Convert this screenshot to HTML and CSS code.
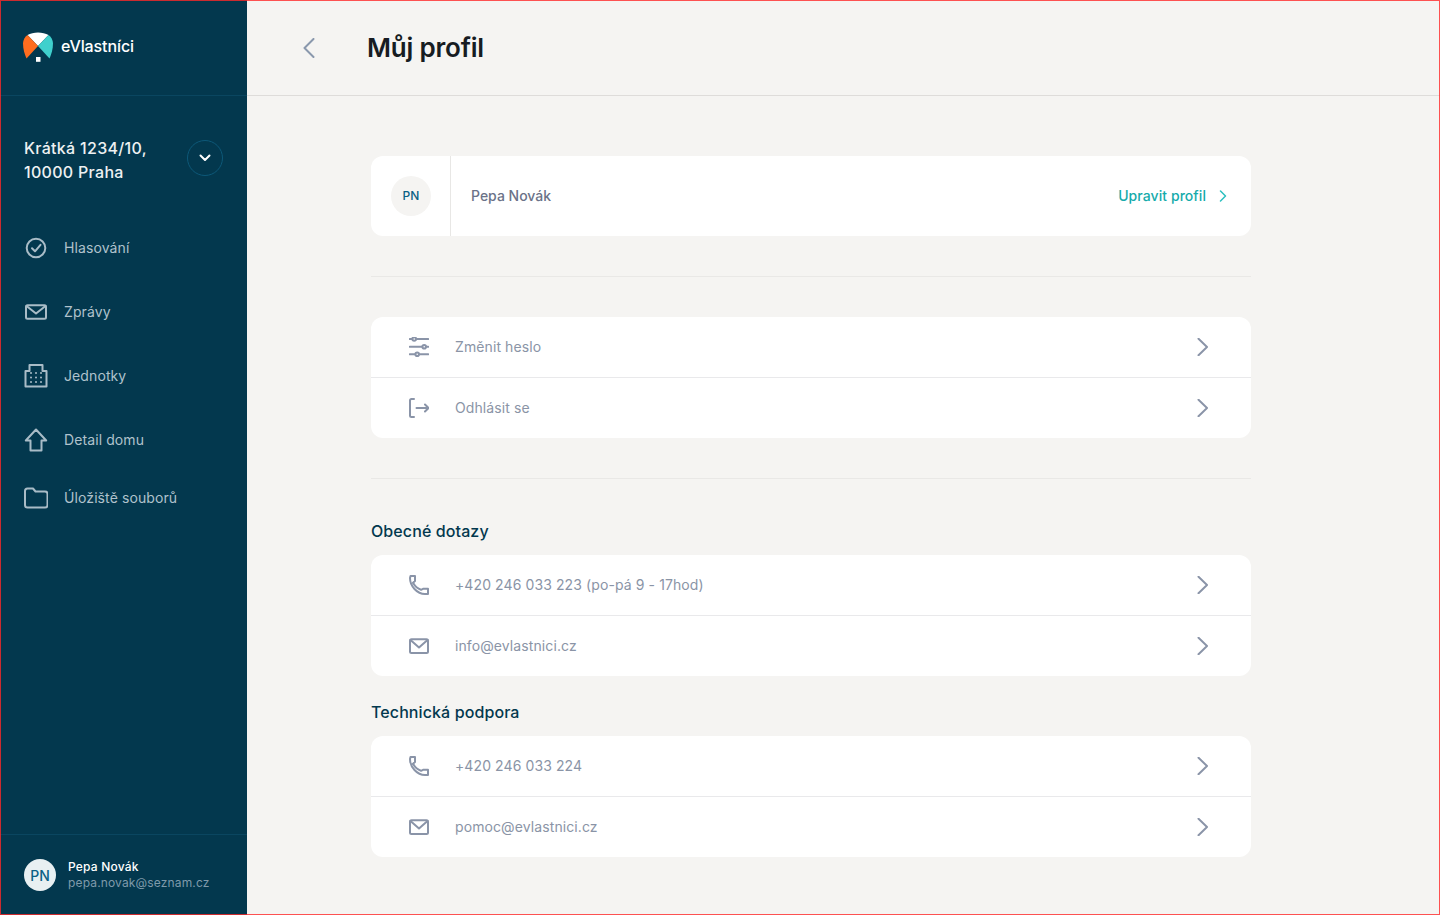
FILE: index.html
```html
<!DOCTYPE html>
<html lang="cs">
<head>
<meta charset="utf-8">
<title>Můj profil</title>
<link rel="stylesheet" href="styles.css">
</head>
<body>
<div class="app">
  <aside class="sidebar">
    <div class="brand">
      <svg class="logo" width="30" height="30" viewBox="0 0 30 30">
        <path d="M4.500 3C10 -.5 20 -.5 25.500 3L15 14Z" fill="#fff"/>
        <path d="M4.500 3 15 14 3.500 26.500C1.500 22 0 17 0 11.500 0 8 2 4.800 4.500 3Z" fill="#ff6d1f"/>
        <path d="M25.500 3 15 14 26.500 26.500C28.500 22 30 17 30 11.500 30 8 28 4.800 25.500 3Z" fill="#3fd0cd"/>
        <rect x="13" y="25" width="4.500" height="4.800" fill="#fff"/>
      </svg>
      <span class="brand-name">eVlastníci</span>
    </div>
    <div class="building">
      <div class="address">Krátká 1234/10,<br>10000 Praha</div>
      <button class="round-toggle" type="button" aria-label="Vybrat dům">
        <svg width="12" height="8" viewBox="0 0 12 8"><path d="M1.500 1.500 6 6l4.500-4.500" class="stroke-white"/></svg>
      </button>
    </div>
    <nav class="nav">
      <a class="nav-item">
        <span class="nav-icon"><svg width="24" height="24" viewBox="0 0 24 24"><circle cx="12" cy="12" r="9.300" class="stroke-nav"/><path d="M8 12.300l3 3 5.500-6.500" class="stroke-nav"/></svg></span>
        <span class="nav-label">Hlasování</span>
      </a>
      <a class="nav-item">
        <span class="nav-icon"><svg width="24" height="24" viewBox="0 0 24 24"><rect x="2" y="5.300" width="20" height="13.400" rx="1.500" class="stroke-nav"/><path d="M2.500 6l9.500 7.500L21.500 6" class="stroke-nav"/></svg></span>
        <span class="nav-label">Zprávy</span>
      </a>
      <a class="nav-item">
        <span class="nav-icon"><svg width="24" height="24" viewBox="0 0 24 24"><path d="M1.500 22.500V7H5.500V1H18.500V7H22.500V22.500Z" class="stroke-nav"/><path d="M7 9h.01M12 9h.01M17 9h.01M7 13.500h.01M12 13.500h.01M17 13.500h.01M7 18h.01M12 18h.01M17 18h.01" class="stroke-nav"/></svg></span>
        <span class="nav-label">Jednotky</span>
      </a>
      <a class="nav-item">
        <span class="nav-icon"><svg width="24" height="24" viewBox="0 0 24 24"><path d="M12 1.500 1.800 12.500H6.500V22.500H17.500V12.500H22.200Z" class="stroke-nav"/></svg></span>
        <span class="nav-label">Detail domu</span>
      </a>
      <a class="nav-item nav-item-last">
        <span class="nav-icon"><svg width="24" height="24" viewBox="0 0 24 24"><path d="M1 5C1 3 2 2.500 3.500 2.500H9L11.500 5.500H21C22.500 5.500 23.500 6.500 23.500 8V19C23.500 20.500 22.500 21.500 21 21.500H3.500C2 21.500 1 20.500 1 19Z" class="stroke-nav"/></svg></span>
        <span class="nav-label">Úložiště souborů</span>
      </a>
    </nav>
    <div class="user">
      <div class="user-avatar">PN</div>
      <div class="user-text">
        <div class="user-name">Pepa Novák</div>
        <div class="user-mail">pepa.novak@seznam.cz</div>
      </div>
    </div>
  </aside>
  <main class="main">
    <header class="topbar">
      <a class="back" aria-label="Zpět"><svg width="12" height="20" viewBox="0 0 12 20"><path d="M10.500 1 1.500 10l9 9" class="stroke-back"/></svg></a>
      <h1 class="title">Můj profil</h1>
    </header>
    <div class="content">
      <section class="card profile">
        <div class="profile-avatar-cell"><div class="profile-avatar">PN</div></div>
        <div class="profile-name">Pepa Novák</div>
        <a class="edit-link"><span>Upravit profil</span>
          <svg width="8" height="12" viewBox="0 0 8 12"><path d="M1.500 1 6.500 6l-5 5" class="stroke-teal"/></svg>
        </a>
      </section>
      <hr class="divider">
      <section class="card">
        <a class="row">
          <span class="row-icon"><svg width="20" height="20" viewBox="0 0 20 20"><path d="M.800 2h2.400M7.200 2h12M.800 9.800h12.400M17.200 9.800h2M.800 17.200h5.400M10.200 17.200h9" class="stroke-grey"/><circle cx="5.200" cy="2" r="1.800" class="stroke-grey"/><circle cx="15.200" cy="9.800" r="1.800" class="stroke-grey"/><circle cx="8.200" cy="17.200" r="1.800" class="stroke-grey"/></svg></span>
          <span class="row-text">Změnit heslo</span>
          <svg class="chev" width="12" height="18" viewBox="0 0 12 18"><path d="M1.500 .8 10 9l-8.500 8.200" class="stroke-grey"/></svg>
        </a>
        <a class="row">
          <span class="row-icon"><svg width="20" height="20" viewBox="0 0 20 20"><path d="M5 1H2.500C1.500 1 1 1.500 1 2.500V17.500C1 18.500 1.500 19 2.500 19H5M7.500 10H19.500M16 6.500l3.500 3.500-3.500 3.500" class="stroke-grey"/></svg></span>
          <span class="row-text">Odhlásit se</span>
          <svg class="chev" width="12" height="18" viewBox="0 0 12 18"><path d="M1.500 .8 10 9l-8.500 8.200" class="stroke-grey"/></svg>
        </a>
      </section>
      <hr class="divider divider-wide">
      <h2 class="section-title">Obecné dotazy</h2>
      <section class="card">
        <a class="row">
          <span class="row-icon"><svg width="20" height="20" viewBox="0 0 20 20"><path d="M1.500 1H6V6L4 7.800C6 11.300 9 13.800 12 14.800L14 13.800H19V19H16C8 19 1 11 1 3Z" class="stroke-grey"/></svg></span>
          <span class="row-text">+420 246 033 223 (po-pá 9 - 17hod)</span>
          <svg class="chev" width="12" height="18" viewBox="0 0 12 18"><path d="M1.500 .8 10 9l-8.500 8.200" class="stroke-grey"/></svg>
        </a>
        <a class="row">
          <span class="row-icon"><svg width="20" height="20" viewBox="0 0 20 20"><rect x="1" y="3.300" width="18" height="13.700" rx="1.500" class="stroke-grey"/><path d="M1.500 4l8.500 7.500L18.500 4" class="stroke-grey"/></svg></span>
          <span class="row-text">info@evlastnici.cz</span>
          <svg class="chev" width="12" height="18" viewBox="0 0 12 18"><path d="M1.500 .8 10 9l-8.500 8.200" class="stroke-grey"/></svg>
        </a>
      </section>
      <h2 class="section-title section-title-next">Technická podpora</h2>
      <section class="card">
        <a class="row">
          <span class="row-icon"><svg width="20" height="20" viewBox="0 0 20 20"><path d="M1.500 1H6V6L4 7.800C6 11.300 9 13.800 12 14.800L14 13.800H19V19H16C8 19 1 11 1 3Z" class="stroke-grey"/></svg></span>
          <span class="row-text">+420 246 033 224</span>
          <svg class="chev" width="12" height="18" viewBox="0 0 12 18"><path d="M1.500 .8 10 9l-8.500 8.200" class="stroke-grey"/></svg>
        </a>
        <a class="row">
          <span class="row-icon"><svg width="20" height="20" viewBox="0 0 20 20"><rect x="1" y="3.300" width="18" height="13.700" rx="1.500" class="stroke-grey"/><path d="M1.500 4l8.500 7.500L18.500 4" class="stroke-grey"/></svg></span>
          <span class="row-text">pomoc@evlastnici.cz</span>
          <svg class="chev" width="12" height="18" viewBox="0 0 12 18"><path d="M1.500 .8 10 9l-8.500 8.200" class="stroke-grey"/></svg>
        </a>
      </section>
    </div>
  </main>
</div>
</body>
</html>
```
FILE: styles.css
```css
* { box-sizing: border-box; }
html, body { margin: 0; padding: 0; height: 100%; }
body { font-family: Inter, "Liberation Sans", sans-serif; background: #f5f4f2; overflow: hidden; }
a { display: flex; text-decoration: none; color: inherit; }
svg { display: block; }

.app { display: flex; width: 1440px; height: 915px; outline: 1px solid rgba(255, 40, 40, .8); outline-offset: -1px; }

.stroke-white, .stroke-nav, .stroke-back, .stroke-teal, .stroke-grey { fill: none; stroke-linecap: round; stroke-linejoin: round; }
.stroke-white { stroke: #fff; stroke-width: 2; }
.stroke-nav { stroke: #a9bcc7; stroke-width: 2; }
.stroke-back { stroke: #8a98ad; stroke-width: 2; }
.stroke-teal { stroke: #2cc0c0; stroke-width: 1.500; }
.stroke-grey { stroke: #8a94a8; stroke-width: 2; }

.sidebar { width: 247px; flex: none; display: flex; flex-direction: column; background: #03384e; color: #fff; }
.brand { height: 96px; flex: none; display: flex; align-items: center; gap: 8px; padding: 0 0 0 23px; border-bottom: 1px solid #0a4660; }
.logo { flex: none; margin-top: -1px; }
.brand-name { font-size: 16px; line-height: 20px; font-weight: 500; color: #fff; letter-spacing: -.1px; margin-bottom: 3px; }

.building { display: flex; align-items: center; justify-content: space-between; padding: 0 24px; height: 120px; flex: none; }
.address { font-size: 16px; font-weight: 500; line-height: 24px; letter-spacing: .3px; color: #eef1f2; margin-top: 8px; }
.round-toggle { width: 36px; height: 36px; border-radius: 50%; border: 1px solid #0d5878; background: transparent; display: flex; align-items: center; justify-content: center; padding: 0; margin-top: 3px; }

.nav { display: flex; flex-direction: column; }
.nav-item { height: 64px; align-items: center; gap: 16px; padding-left: 24px; font-size: 14px; color: #b0c2cc; letter-spacing: .1px; }
.nav-item-last { height: 52px; }
.nav-label { line-height: 20px; }
.nav-icon { width: 24px; height: 24px; flex: none; }

.user { margin-top: auto; height: 81px; flex: none; display: flex; align-items: center; gap: 12px; padding-left: 24px; border-top: 1px solid #0a4660; }
.user-avatar { width: 32px; height: 32px; border-radius: 50%; background: #e8f0f2; color: #0b6185; font-size: 14px; font-weight: 500; display: flex; align-items: center; justify-content: center; }
.user-name { font-size: 12px; font-weight: 500; line-height: 16px; color: #fff; letter-spacing: .2px; }
.user-mail { font-size: 12px; line-height: 16px; color: #7f9aaa; letter-spacing: .15px; }

.main { flex: 1; min-width: 0; display: flex; flex-direction: column; }
.topbar { height: 96px; flex: none; display: flex; align-items: center; border-bottom: 1px solid #dedcda; }
.back { width: 120px; padding-left: 56px; flex: none; }
.title { margin: 0; font-size: 26px; font-weight: 600; color: #171c22; line-height: 32px; letter-spacing: -.2px; }

.content { width: 880px; margin-left: 124px; padding-top: 60px; }
.card { background: #fff; border-radius: 12px; overflow: hidden; }
.profile { height: 80px; display: flex; align-items: center; }
.profile-avatar-cell { width: 80px; height: 80px; flex: none; display: flex; align-items: center; justify-content: center; border-right: 1px solid #e8e7e5; }
.profile-avatar { width: 40px; height: 40px; border-radius: 50%; background: #f5f4f2; color: #0b6185; font-size: 12px; line-height: 20px; font-weight: 500; padding-left: 1px; display: flex; align-items: center; justify-content: center; }
.profile-name { flex: 1; padding-left: 20px; font-size: 14px; line-height: 20px; font-weight: 500; color: #6b7288; }
.edit-link { align-items: center; gap: 13px; padding-right: 24px; font-size: 14px; line-height: 20px; font-weight: 500; color: #16abab; letter-spacing: .07px; }

.divider { border: 0; border-top: 1px solid #e9e8e6; margin: 40px 0 40px; }
.divider-wide { margin-bottom: 0; }
.section-title { margin: 0; padding-top: 42px; height: 76px; font-size: 16px; font-weight: 500; line-height: 20px; color: #03384e; letter-spacing: .1px; }
.section-title-next { padding-top: 26px; height: 60px; }

.row { height: 60px; align-items: center; padding: 0 42px 0 38px; font-size: 14px; line-height: 20px; color: #8a94a6; }
.row + .row { height: 61px; border-top: 1px solid #e9e9eb; }
.row-icon { width: 20px; flex: none; margin-right: 26px; }
.row-text { flex: 1; letter-spacing: .1px; }
.chev { flex: none; }
```
